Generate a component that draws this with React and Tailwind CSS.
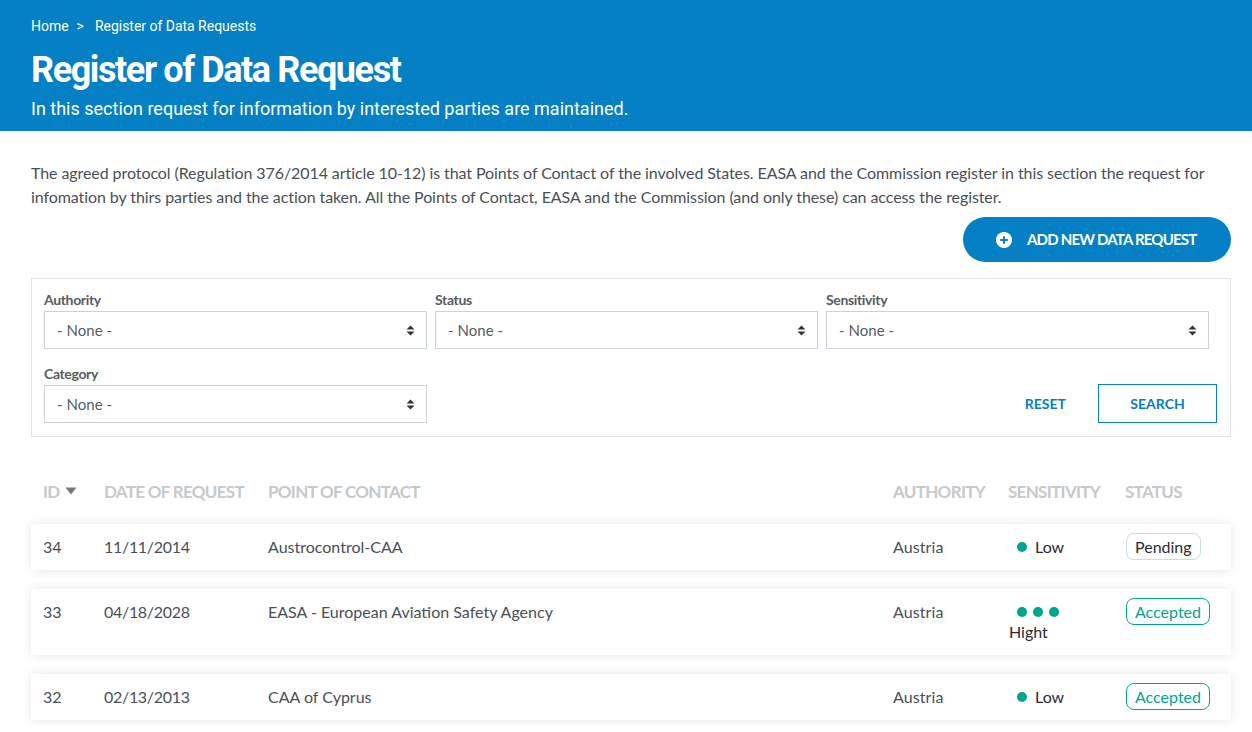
import React from "react";

const lato = "font-['Lato','Open_Sans',sans-serif]";

const rows = [
  { id: 34, date: "11/11/2014", contact: "Austrocontrol-CAA", authority: "Austria", dots: 1, level: "Low", status: "Pending" },
  { id: 33, date: "04/18/2028", contact: "EASA - European Aviation Safety Agency", authority: "Austria", dots: 3, level: "Hight", status: "Accepted" },
  { id: 32, date: "02/13/2013", contact: "CAA of Cyprus", authority: "Austria", dots: 1, level: "Low", status: "Accepted" },
];

const gridCols = "grid grid-cols-[61px_164px_625px_116px_117px_1fr] pl-3";

function Select({ label }) {
  return (
    <div className="w-[383px]">
      <div className="text-[14px] leading-[18px] font-bold tracking-[-0.35px] text-[#565c64] mb-[2px]">{label}</div>
      <div className="h-[38px] border border-[#ccd2da] flex items-center justify-between pl-3 pr-[11px] text-[15px] tracking-[0.05px] text-[#555c66] bg-white">
        <span>- None -</span>
        <svg width="9" height="11" viewBox="0 0 9 11" fill="#333">
          <path d="M4.5 0.5 L8.5 4.5 H0.5 Z" />
          <path d="M4.5 10.5 L8.5 6.5 H0.5 Z" />
        </svg>
      </div>
    </div>
  );
}

function Status({ value }) {
  const accepted = value === "Accepted";
  return (
    <span
      className={
        "inline-block h-[27px] leading-[25px] px-2 rounded-lg border text-[16px] " +
        (accepted ? "border-[#00a58e] text-[#00a58e]" : "border-[#c8daf0] text-[#2a2a35]")
      }
    >
      {value}
    </span>
  );
}

export default function App() {
  return (
    <div className={lato + " bg-white text-[#4a4f57]"}>
      {/* Header */}
      <div className="h-[131px] bg-[#0580c4] text-white px-[31px] pt-[17px] font-['Roboto',sans-serif]">
        <div className="text-[14px] leading-[18px] flex tracking-[-0.02px]">
          <span>Home</span>
          <span className="ml-[8px] mr-[11px]">&gt;</span>
          <span>Register of Data Requests</span>
        </div>
        <h1 className="text-[36px] leading-[44px] font-bold mt-[13px] tracking-[-1.4px]">Register of Data Request</h1>
        <p className="text-[18px] leading-[24px] font-normal mt-[5px]">
          In this section request for information by interested parties are maintained.
        </p>
      </div>

      <div className="px-[31px] pt-[30px] w-[1231px] box-content pb-[12px]">
        <p className="text-[16px] leading-[24px] tracking-[-0.08px] w-[1190px] text-[#4a4f57]">
          The agreed protocol (Regulation 376/2014 article 10-12) is that Points of Contact of the involved States. EASA and the Commission register in this section the request for infomation by thirs parties and the action taken. All the Points of Contact, EASA and the Commission (and only these) can access the register.
        </p>

        {/* Add button */}
        <div className="w-[1200px] flex justify-end mt-[8px]">
          <div className="w-[268px] h-[45px] rounded-full bg-[#0580c4] text-white flex items-center pl-[33px] text-[15px] font-bold tracking-[-0.8px]">
            <svg width="16" height="16" viewBox="0 0 16 16" className="mr-[15px]">
              <circle cx="8" cy="8" r="8" fill="#fff" />
              <path d="M8 4.2v7.6M4.2 8h7.6" stroke="#0580c4" strokeWidth="2" />
            </svg>
            ADD NEW DATA REQUEST
          </div>
        </div>

        {/* Filters */}
        <div className="w-[1200px] h-[159px] mt-[16px] border border-[#dfe3e8] pl-3 pt-[12px]">
          <div className="flex gap-2">
            <Select label="Authority" />
            <Select label="Status" />
            <Select label="Sensitivity" />
          </div>
          <div className="flex justify-between mt-[16px]">
            <Select label="Category" />
            <div className="flex items-end mr-[13px]">
              <span className="text-[14px] font-bold text-[#0580c4] mb-[9px] mr-[32px]">RESET</span>
              <div className="w-[119px] h-[39px] border border-[#0580c4] flex items-center justify-center text-[14px] font-bold text-[#0580c4]">
                SEARCH
              </div>
            </div>
          </div>
        </div>

        {/* Table head */}
        <div className={gridCols + " w-[1200px] mt-[44px] h-[22px] items-center text-[17px] leading-[22px] font-bold text-[#c6c8ca] tracking-[-0.7px]"}>
          <div className="flex items-center">
            ID
            <svg width="12" height="8" viewBox="0 0 12 8" className="ml-[5px] mb-[3px]" fill="#777">
              <path d="M0.5 0.5 H11.5 L6 7.5 Z" />
            </svg>
          </div>
          <div>DATE OF REQUEST</div>
          <div>POINT OF CONTACT</div>
          <div>AUTHORITY</div>
          <div className="-ml-[1px]">SENSITIVITY</div>
          <div className="-ml-[1px]">STATUS</div>
        </div>

        {/* Rows */}
        <div className="w-[1200px] mt-[21px] flex flex-col gap-[19px]">
          {rows.map((r) => (
            <div
              key={r.id}
              className={gridCols + " bg-white py-[13px] text-[16px] leading-[20px] text-[#4a4f57] shadow-[0_0_10px_rgba(0,0,0,0.1)]"}
            >
              <div>{r.id}</div>
              <div className="tracking-[-0.3px]">{r.date}</div>
              <div>{r.contact}</div>
              <div className="tracking-[0.1px]">{r.authority}</div>
              <div className="text-[#2a2a35]">
                {r.dots === 1 ? (
                  <div className="flex items-center pl-2">
                    <span className="w-[10px] h-[10px] rounded-full bg-[#00a58e] mr-[8px]" />
                    {r.level}
                  </div>
                ) : (
                  <>
                    <div className="flex h-[20px] items-center pl-2 gap-[6px]">
                      {[0, 1, 2].map((d) => (
                        <span key={d} className="w-[10px] h-[10px] rounded-full bg-[#00a58e]" />
                      ))}
                    </div>
                    <div>{r.level}</div>
                  </>
                )}
              </div>
              <div className="-mt-[4px] h-[20px]">
                <Status value={r.status} />
              </div>
            </div>
          ))}
        </div>
      </div>
    </div>
  );
}
